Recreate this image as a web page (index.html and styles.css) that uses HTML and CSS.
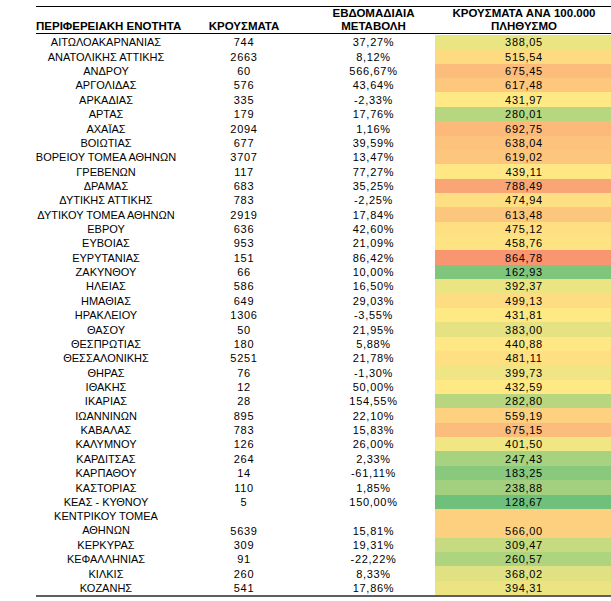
FILE: index.html
```html
<!DOCTYPE html>
<html lang="el">
<head>
<meta charset="utf-8">
<title>Κρούσματα ανά περιφερειακή ενότητα</title>
<link rel="stylesheet" href="styles.css">
</head>
<body>
<div class="sheet">
  <div class="head">
    <div class="hc">ΠΕΡΙΦΕΡΕΙΑΚΗ ΕΝΟΤΗΤΑ</div>
    <div class="hc">ΚΡΟΥΣΜΑΤΑ</div>
    <div class="hc">ΕΒΔΟΜΑΔΙΑΙΑ<br>ΜΕΤΑΒΟΛΗ</div>
    <div class="hc">ΚΡΟΥΣΜΑΤΑ ΑΝΑ 100.000<br>ΠΛΗΘΥΣΜΟ</div>
  </div>
  <div class="body">
    <div class="c name">ΑΙΤΩΛΟΑΚΑΡΝΑΝΙΑΣ</div><div class="c num">744</div><div class="c num">37,27%</div><div class="c num rate" style="background:#e9e583">388,05</div>
    <div class="c name">ΑΝΑΤΟΛΙΚΗΣ ΑΤΤΙΚΗΣ</div><div class="c num">2663</div><div class="c num">8,12%</div><div class="c num rate" style="background:#fedb81">515,54</div>
    <div class="c name">ΑΝΔΡΟΥ</div><div class="c num">60</div><div class="c num">566,67%</div><div class="c num rate" style="background:#fcbc7b">675,45</div>
    <div class="c name">ΑΡΓΟΛΙΔΑΣ</div><div class="c num">576</div><div class="c num">43,64%</div><div class="c num rate" style="background:#fdc77d">617,48</div>
    <div class="c name">ΑΡΚΑΔΙΑΣ</div><div class="c num">335</div><div class="c num">-2,33%</div><div class="c num rate" style="background:#fee984">431,97</div>
    <div class="c name">ΑΡΤΑΣ</div><div class="c num">179</div><div class="c num">17,76%</div><div class="c num rate" style="background:#b6d680">280,01</div>
    <div class="c name">ΑΧΑΪΑΣ</div><div class="c num">2094</div><div class="c num">1,16%</div><div class="c num rate" style="background:#fcb97a">692,75</div>
    <div class="c name">ΒΟΙΩΤΙΑΣ</div><div class="c num">677</div><div class="c num">39,59%</div><div class="c num rate" style="background:#fdc37c">638,04</div>
    <div class="c name">ΒΟΡΕΙΟΥ ΤΟΜΕΑ ΑΘΗΝΩΝ</div><div class="c num">3707</div><div class="c num">13,47%</div><div class="c num rate" style="background:#fdc67d">619,02</div>
    <div class="c name">ΓΡΕΒΕΝΩΝ</div><div class="c num">117</div><div class="c num">77,27%</div><div class="c num rate" style="background:#fee784">439,11</div>
    <div class="c name">ΔΡΑΜΑΣ</div><div class="c num">683</div><div class="c num">35,25%</div><div class="c num rate" style="background:#faa575">788,49</div>
    <div class="c name">ΔΥΤΙΚΗΣ ΑΤΤΙΚΗΣ</div><div class="c num">783</div><div class="c num">-2,25%</div><div class="c num rate" style="background:#fee082">474,94</div>
    <div class="c name">ΔΥΤΙΚΟΥ ΤΟΜΕΑ ΑΘΗΝΩΝ</div><div class="c num">2919</div><div class="c num">17,84%</div><div class="c num rate" style="background:#fdc67d">613,48</div>
    <div class="c name">ΕΒΡΟΥ</div><div class="c num">636</div><div class="c num">42,60%</div><div class="c num rate" style="background:#fee082">475,12</div>
    <div class="c name">ΕΥΒΟΙΑΣ</div><div class="c num">953</div><div class="c num">21,09%</div><div class="c num rate" style="background:#fee383">458,76</div>
    <div class="c name">ΕΥΡΥΤΑΝΙΑΣ</div><div class="c num">151</div><div class="c num">86,42%</div><div class="c num rate" style="background:#f99671">864,78</div>
    <div class="c name">ΖΑΚΥΝΘΟΥ</div><div class="c num">66</div><div class="c num">10,00%</div><div class="c num rate" style="background:#7fc57c">162,93</div>
    <div class="c name">ΗΛΕΙΑΣ</div><div class="c num">586</div><div class="c num">16,50%</div><div class="c num rate" style="background:#eae483">392,37</div>
    <div class="c name">ΗΜΑΘΙΑΣ</div><div class="c num">649</div><div class="c num">29,03%</div><div class="c num rate" style="background:#fedc81">499,13</div>
    <div class="c name">ΗΡΑΚΛΕΙΟΥ</div><div class="c num">1306</div><div class="c num">-3,55%</div><div class="c num rate" style="background:#fee984">431,81</div>
    <div class="c name">ΘΑΣΟΥ</div><div class="c num">50</div><div class="c num">21,95%</div><div class="c num rate" style="background:#e5e283">383,00</div>
    <div class="c name">ΘΕΣΠΡΩΤΙΑΣ</div><div class="c num">180</div><div class="c num">5,88%</div><div class="c num rate" style="background:#fee784">440,88</div>
    <div class="c name">ΘΕΣΣΑΛΟΝΙΚΗΣ</div><div class="c num">5251</div><div class="c num">21,78%</div><div class="c num rate" style="background:#fedf82">481,11</div>
    <div class="c name">ΘΗΡΑΣ</div><div class="c num">76</div><div class="c num">-1,30%</div><div class="c num rate" style="background:#efe584">399,73</div>
    <div class="c name">ΙΘΑΚΗΣ</div><div class="c num">12</div><div class="c num">50,00%</div><div class="c num rate" style="background:#fee984">432,59</div>
    <div class="c name">ΙΚΑΡΙΑΣ</div><div class="c num">28</div><div class="c num">154,55%</div><div class="c num rate" style="background:#b8d680">282,80</div>
    <div class="c name">ΙΩΑΝΝΙΝΩΝ</div><div class="c num">895</div><div class="c num">22,10%</div><div class="c num rate" style="background:#fdd17f">559,19</div>
    <div class="c name">ΚΑΒΑΛΑΣ</div><div class="c num">783</div><div class="c num">15,83%</div><div class="c num rate" style="background:#fcbc7b">675,15</div>
    <div class="c name">ΚΑΛΥΜΝΟΥ</div><div class="c num">126</div><div class="c num">26,00%</div><div class="c num rate" style="background:#f0e684">401,50</div>
    <div class="c name">ΚΑΡΔΙΤΣΑΣ</div><div class="c num">264</div><div class="c num">2,33%</div><div class="c num rate" style="background:#a7d27f">247,43</div>
    <div class="c name">ΚΑΡΠΑΘΟΥ</div><div class="c num">14</div><div class="c num">-61,11%</div><div class="c num rate" style="background:#89c97d">183,25</div>
    <div class="c name">ΚΑΣΤΟΡΙΑΣ</div><div class="c num">110</div><div class="c num">1,85%</div><div class="c num rate" style="background:#a3d07f">238,88</div>
    <div class="c name">ΚΕΑΣ - ΚΥΘΝΟΥ</div><div class="c num">5</div><div class="c num">150,00%</div><div class="c num rate" style="background:#6fc07b">128,67</div>
    <div class="c name tall">ΚΕΝΤΡΙΚΟΥ ΤΟΜΕΑ<br>ΑΘΗΝΩΝ</div><div class="c num tall">5639</div><div class="c num tall">15,81%</div><div class="c num rate tall" style="background:#fdd07f">566,00</div>
    <div class="c name">ΚΕΡΚΥΡΑΣ</div><div class="c num">309</div><div class="c num">19,31%</div><div class="c num rate" style="background:#c6da80">309,47</div>
    <div class="c name">ΚΕΦΑΛΛΗΝΙΑΣ</div><div class="c num">91</div><div class="c num">-22,22%</div><div class="c num rate" style="background:#aed47f">260,57</div>
    <div class="c name">ΚΙΛΚΙΣ</div><div class="c num">260</div><div class="c num">8,33%</div><div class="c num rate" style="background:#e0e182">368,02</div>
    <div class="c name">ΚΟΖΑΝΗΣ</div><div class="c num">541</div><div class="c num">17,86%</div><div class="c num rate" style="background:#ece483">394,31</div>
  </div>
</div>
</body>
</html>
```
FILE: styles.css
```css
html, body {
  margin: 0;
  padding: 0;
  background: #ffffff;
  overflow: hidden;
}

body {
  padding-top: 6px;
  width: 611px;
  height: 601px;
  box-sizing: border-box;
}

.sheet {
  margin-left: 36px;
  width: 577px;
  border-top: 1px solid #000000;
  border-bottom: 2px solid #5e5e5e;
  color: #000000;
}

.head,
.body {
  display: grid;
  grid-template-columns: 140px 136px 123px 178px;
}

.head {
  height: 26px;
  border-bottom: 1px solid #000000;
  margin-bottom: 1px;
  align-items: end;
}

.hc {
  font-family: "Liberation Sans Narrow", "Liberation Sans", sans-serif;
  font-weight: bold;
  font-size: 11.5px;
  line-height: 12.5px;
  text-align: center;
  white-space: nowrap;
  padding-bottom: 1px;
}

.body {
  grid-auto-rows: 14.36px;
}

.c {
  display: flex;
  align-items: flex-end;
  justify-content: center;
  line-height: 13px;
  font-size: 11px;
  white-space: nowrap;
  text-align: center;
}

.name {
  font-family: "Liberation Sans Narrow", "Liberation Sans", sans-serif;
  font-size: 11px;
}

.num {
  font-family: "Liberation Sans", sans-serif;
  letter-spacing: 0.7px;
}

.tall {
  grid-row: span 2;
}

.name.tall {
  line-height: 14.36px;
}
```
